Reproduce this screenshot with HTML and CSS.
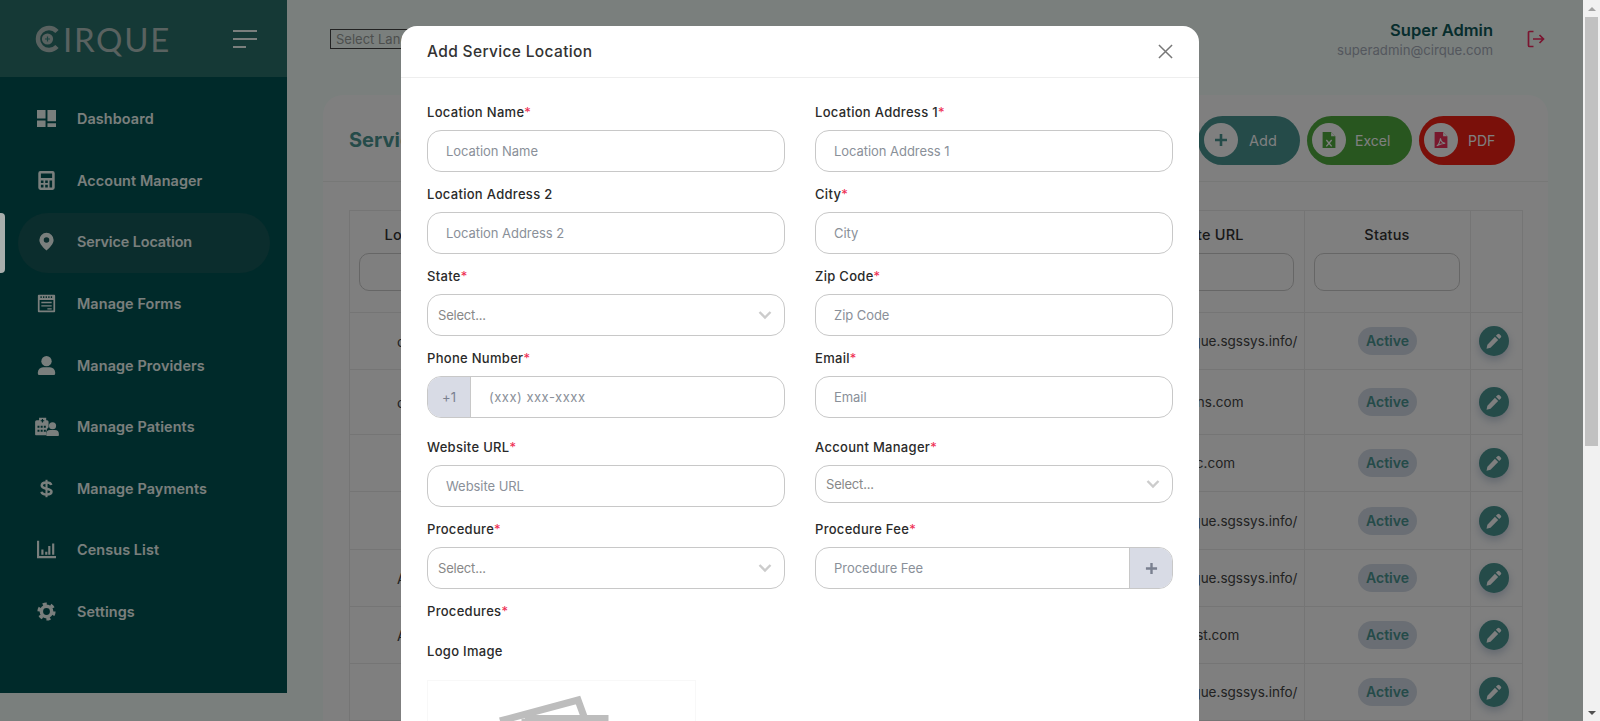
FILE: index.html
```html
<!DOCTYPE html>
<html lang="en">
<head>
    <meta charset="UTF-8">
    <meta name="viewport" content="width=device-width, initial-scale=1.0">
    <title>Service Location</title>
    <link rel="stylesheet" href="styles.css">
</head>
<body>
    <!-- shared icons -->
    <svg class="sprite" aria-hidden="true">
        <symbol id="i-pencil" viewBox="0 0 16 16">
            <path d="M11.500 1.200a1.400 1.400 0 0 1 2 0l1.300 1.300a1.400 1.400 0 0 1 0 2l-1.600 1.600-3.300-3.300z" fill="currentColor"/>
            <path d="M8.900 3.800l3.300 3.300-7.700 7.700-4 .9.900-4z" fill="currentColor"/>
        </symbol>
        <symbol id="i-chevron" viewBox="0 0 14 10">
            <path d="M1.500 2l5.500 5.500L12.500 2" fill="none" stroke="currentColor" stroke-width="2.400"/>
        </symbol>
    </svg>

    <div class="app">
        <aside class="sidebar">
            <div class="brand">
                <div class="logo">
                    <svg class="logo-mark" viewBox="0 0 27 28">
                        <path d="M24 6.500A11 11 0 1 0 24 21.500" fill="none" stroke="currentColor" stroke-width="4.400"/>
                        <circle cx="14.500" cy="14" r="5.600" fill="currentColor"/>
                        <path d="M14.500 11.500v5M12 14h5" stroke="#328680" stroke-width="1.200"/>
                    </svg>
                    <span class="logo-text">IRQUE</span>
                </div>
                <div class="burger"><span></span><span></span><span class="short"></span></div>
            </div>
            <nav class="menu">
                <a class="menu-item">
                    <svg class="menu-icon" viewBox="2 3 20 18"><path d="M2 3h9v9H2zM13 3h9v12h-9zM2 14h9v7H2zM13 17h9v4h-9z"/></svg>
                    Dashboard
                </a>
                <a class="menu-item">
                    <svg class="menu-icon" viewBox="1 1 22 22"><path fill-rule="evenodd" d="M5 1h14a2.500 2.500 0 0 1 2.500 2.500v17A2.500 2.500 0 0 1 19 23H5a2.500 2.500 0 0 1-2.500-2.500v-17A2.500 2.500 0 0 1 5 1zm.5 3v5h13V4zm0 8v3h3v-3zm5 0v3h3v-3zm5 0v8h3v-8zm-10 5v3h3v-3zm5 0v3h3v-3z"/></svg>
                    Account Manager
                </a>
                <a class="menu-item active">
                    <svg class="menu-icon" viewBox="0 0 24 24"><path fill-rule="evenodd" d="M12 1a9 9 0 0 1 9 9c0 5-5.500 10-9 13.500C8.500 20 3 15 3 10a9 9 0 0 1 9-9zm0 5.500a3.500 3.500 0 1 0 0 7 3.500 3.500 0 0 0 0-7z"/></svg>
                    Service Location
                </a>
                <a class="menu-item">
                    <svg class="menu-icon" viewBox="1 1 22 22"><path fill-rule="evenodd" d="M3 2h18a1 1 0 0 1 1 1v18a1 1 0 0 1-1 1H3a1 1 0 0 1-1-1V3a1 1 0 0 1 1-1zm1 6v12h16V8zm2 2h12v1.600H6zm0 4h12v1.600H6zm7 3.500h5v1.500h-5zM5 3.500h1.500v2H5zm3 0h1.500v2H8zm3 0h1.500v2H11zm3 0h1.500v2H14zm3 0h1.500v2H17z"/></svg>
                    Manage Forms
                </a>
                <a class="menu-item">
                    <svg class="menu-icon" viewBox="1 1 22 22"><circle cx="12" cy="7" r="6"/><path d="M8 14h8a6 6 0 0 1 6 6v1.500a1.500 1.500 0 0 1-1.500 1.500h-17A1.500 1.500 0 0 1 2 21.500V20a6 6 0 0 1 6-6z"/></svg>
                    Manage Providers
                </a>
                <a class="menu-item">
                    <svg class="menu-icon wide" viewBox="0 0 30 24"><path fill-rule="evenodd" d="M5 1h9v3h1a2 2 0 0 1 2 2v7a7 7 0 0 0-3 6v4H1a1 1 0 0 1-1-1V6a2 2 0 0 1 2-2h3zm2 10v2.500h2.500V11zm-4 0v2.500h2.500V11zm8 0v2.500h2.500V11zm-8 5v2.500h2.500V16zm8 0v2.500h2.500V16zm-4 0v2.500h2.500V16zM8.500 2.500v1.500H7v1.500h1.500V7H10V5.500h1.500V4H10V2.500z"/><circle cx="22" cy="11" r="4.500"/><path d="M19 16.500h6a5 5 0 0 1 5 5V23a1 1 0 0 1-1 1H15a1 1 0 0 1-1-1v-1.500a5 5 0 0 1 5-5z"/></svg>
                    Manage Patients
                </a>
                <a class="menu-item">
                    <svg class="menu-icon" viewBox="0 0 24 24"><path d="M12 1v22" stroke="currentColor" stroke-width="2.600"/><path d="M18 7.500C17.500 5.500 15 4.500 12 4.500c-3.500 0-6 1.600-6 3.800 0 5.400 12.300 2.400 12.300 7.800 0 2.200-2.800 3.400-6.300 3.400-3.200 0-5.800-1.100-6.300-3.500" fill="none" stroke="currentColor" stroke-width="3.200"/></svg>
                    Manage Payments
                </a>
                <a class="menu-item">
                    <svg class="menu-icon" viewBox="1 2 22 20"><path d="M1 2h2.500v17.500H23V22H1zM6 12h2.500v6H6zM10.500 14.500H13V18h-2.500zM14 8h2.500v10H14zM18.500 5H21v13h-2.500z"/></svg>
                    Census List
                </a>
                <a class="menu-item">
                    <svg class="menu-icon" viewBox="0 0 24 24"><circle cx="12" cy="12" r="6.500" fill="none" stroke="currentColor" stroke-width="4.400"/><circle cx="12" cy="12" r="9.700" fill="none" stroke="currentColor" stroke-width="3.600" stroke-dasharray="5.100 5.060"/></svg>
                    Settings
                </a>
            </nav>
        </aside>

        <main class="main">
            <header class="topbar">
                <select class="lang-select">
                    <option>Select Language</option>
                </select>
                <div class="user">
                    <div class="user-name">Super Admin</div>
                    <div class="user-mail">superadmin@cirque.com</div>
                </div>
                <svg class="logout" viewBox="0 0 18 18">
                    <path d="M6.500 1.500H2.500a1 1 0 0 0-1 1v13a1 1 0 0 0 1 1h4M6 9h10.500M12.500 5l4 4-4 4" fill="none" stroke="currentColor" stroke-width="1.700"/>
                </svg>
            </header>

            <section class="card">
                <div class="card-head">
                    <h2 class="card-title">Service Location</h2>
                    <div class="actions">
                        <button class="pill-btn btn-add">
                            <span class="pill-circle">
                                <svg viewBox="0 0 14 14"><path d="M7 1v12M1 7h12" stroke="#4a9693" stroke-width="2.600"/></svg>
                            </span>
                            Add
                        </button>
                        <button class="pill-btn btn-excel">
                            <span class="pill-circle">
                                <svg viewBox="0 0 12 15"><path d="M0 0h8l4 4v11H0z" fill="#50ac3e"/><path d="M3.500 7.500l5 6M8.500 7.500l-5 6" stroke="#fff" stroke-width="1.300"/><path d="M8 0v4h4z" fill="#fff"/></svg>
                            </span>
                            Excel
                        </button>
                        <button class="pill-btn btn-pdf">
                            <span class="pill-circle">
                                <svg viewBox="0 0 12 15"><path d="M0 0h8l4 4v11H0z" fill="#f0305a"/><path d="M8 0v4h4z" fill="#fff"/><path d="M2 13c2-1 3-4 3.500-7 .5 3 2 4.500 4.500 4.500-3 0-5.500 1-8 2.500z" fill="none" stroke="#fff" stroke-width="1"/></svg>
                            </span>
                            PDF
                        </button>
                    </div>
                </div>

                <table class="data-table">
                    <colgroup>
                        <col class="col-name">
                        <col class="col-address">
                        <col class="col-phone">
                        <col class="col-url">
                        <col class="col-status">
                        <col class="col-edit">
                    </colgroup>
                    <thead>
                        <tr>
                            <th class="th-name">Location Name<input class="filter"></th>
                            <th>Address<input class="filter"></th>
                            <th>Phone<input class="filter"></th>
                            <th>Website URL<input class="filter"></th>
                            <th>Status<input class="filter"></th>
                            <th></th>
                        </tr>
                    </thead>
                    <tbody>
                        <tr>
                            <td class="td-name">cirque</td><td></td><td></td>
                            <td class="td-url">https://app1.cirque.sgssys.info/</td>
                            <td><span class="badge">Active</span></td>
                            <td class="td-edit"><button class="edit-btn"><svg><use href="#i-pencil"/></svg></button></td>
                        </tr>
                        <tr class="tall">
                            <td class="td-name">cirque</td><td></td><td></td>
                            <td class="td-url">mediplans.com</td>
                            <td><span class="badge">Active</span></td>
                            <td class="td-edit"><button class="edit-btn"><svg><use href="#i-pencil"/></svg></button></td>
                        </tr>
                        <tr>
                            <td class="td-name"></td><td></td><td></td>
                            <td class="td-url">sgclinic.com</td>
                            <td><span class="badge">Active</span></td>
                            <td class="td-edit"><button class="edit-btn"><svg><use href="#i-pencil"/></svg></button></td>
                        </tr>
                        <tr>
                            <td class="td-name"></td><td></td><td></td>
                            <td class="td-url">https://app1.cirque.sgssys.info/</td>
                            <td><span class="badge">Active</span></td>
                            <td class="td-edit"><button class="edit-btn"><svg><use href="#i-pencil"/></svg></button></td>
                        </tr>
                        <tr>
                            <td class="td-name">Acme</td><td></td><td></td>
                            <td class="td-url">https://app1.cirque.sgssys.info/</td>
                            <td><span class="badge">Active</span></td>
                            <td class="td-edit"><button class="edit-btn"><svg><use href="#i-pencil"/></svg></button></td>
                        </tr>
                        <tr>
                            <td class="td-name">Acme</td><td></td><td></td>
                            <td class="td-url">clinictest.com</td>
                            <td><span class="badge">Active</span></td>
                            <td class="td-edit"><button class="edit-btn"><svg><use href="#i-pencil"/></svg></button></td>
                        </tr>
                        <tr>
                            <td class="td-name"></td><td></td><td></td>
                            <td class="td-url">https://app1.cirque.sgssys.info/</td>
                            <td><span class="badge">Active</span></td>
                            <td class="td-edit"><button class="edit-btn"><svg><use href="#i-pencil"/></svg></button></td>
                        </tr>
                    </tbody>
                </table>
            </section>
        </main>

        <div class="backdrop"></div>

        <section class="modal">
            <div class="modal-head">
                <h3 class="modal-title">Add Service Location</h3>
                <svg class="modal-close" viewBox="0 0 16 16"><path d="M1 1l14 14M15 1L1 15" stroke="currentColor" stroke-width="1.600"/></svg>
            </div>
            <div class="modal-body">
                <div class="form-grid">
                    <div class="field">
                        <label>Location Name<span class="req">*</span></label>
                        <input class="control" placeholder="Location Name">
                    </div>
                    <div class="field">
                        <label>Location Address 1<span class="req">*</span></label>
                        <input class="control" placeholder="Location Address 1">
                    </div>
                    <div class="field">
                        <label>Location Address 2</label>
                        <input class="control" placeholder="Location Address 2">
                    </div>
                    <div class="field">
                        <label>City<span class="req">*</span></label>
                        <input class="control" placeholder="City">
                    </div>
                    <div class="field">
                        <label>State<span class="req">*</span></label>
                        <div class="control select">Select...<svg class="chevron"><use href="#i-chevron"/></svg></div>
                    </div>
                    <div class="field">
                        <label>Zip Code<span class="req">*</span></label>
                        <input class="control" placeholder="Zip Code">
                    </div>
                    <div class="field field-phone">
                        <label>Phone Number<span class="req">*</span></label>
                        <div class="control group">
                            <span class="prefix">+1</span>
                            <input class="group-input phone-input" placeholder="(xxx) xxx-xxxx">
                        </div>
                    </div>
                    <div class="field field-phone">
                        <label>Email<span class="req">*</span></label>
                        <input class="control" placeholder="Email">
                    </div>
                    <div class="field">
                        <label>Website URL<span class="req">*</span></label>
                        <input class="control" placeholder="Website URL">
                    </div>
                    <div class="field">
                        <label>Account Manager<span class="req">*</span></label>
                        <div class="control select short">Select...<svg class="chevron"><use href="#i-chevron"/></svg></div>
                    </div>
                    <div class="field">
                        <label>Procedure<span class="req">*</span></label>
                        <div class="control select">Select...<svg class="chevron"><use href="#i-chevron"/></svg></div>
                    </div>
                    <div class="field">
                        <label>Procedure Fee<span class="req">*</span></label>
                        <div class="control group">
                            <input class="group-input" placeholder="Procedure Fee">
                            <span class="suffix">
                                <svg viewBox="0 0 14 14"><path d="M7 1v12M1 7h12" stroke="currentColor" stroke-width="2.600"/></svg>
                            </span>
                        </div>
                    </div>
                </div>
                <label class="block-label procedures-label">Procedures<span class="req">*</span></label>
                <label class="block-label logo-label">Logo Image</label>
                <div class="logo-box">
                    <svg class="logo-placeholder" viewBox="0 0 269 60">
                        <path d="M72 40l78-21 8 22" fill="none" stroke="#bdbdbd" stroke-width="7"/>
                        <path d="M97 37.500h80V60M97 37.500V60" fill="none" stroke="#bdbdbd" stroke-width="7"/>
                    </svg>
                </div>
            </div>
        </section>
    </div>

    <div class="scrollbar">
        <span class="arrow up"></span>
        <span class="thumb"></span>
        <span class="arrow down"></span>
    </div>
</body>
</html>
```

FILE: styles.css
```css
* {
    box-sizing: border-box;
}

body {
    margin: 0;
    height: 721px;
    display: flex;
    overflow: hidden;
    font-family: Inter, "Open Sans", sans-serif;
    background-color: #f4fffb;
}

.sprite {
    display: none;
}

.app {
    position: relative;
    flex: 1;
    display: flex;
    align-items: flex-start;
    height: 721px;
    overflow: hidden;
}

/* sidebar */
.sidebar {
    width: 287px;
    height: 693px;
    flex-shrink: 0;
    background-color: #005454;
    color: #f4fffb;
}

.brand {
    height: 77px;
    display: flex;
    align-items: center;
    justify-content: space-between;
    padding: 0 30px 0 33px;
    background-color: #2b726d;
}

.logo {
    display: flex;
    align-items: center;
    gap: 3px;
    color: #b2c4c0;
}

.logo-mark {
    width: 27px;
    height: 28px;
}

.logo-text {
    font-family: Lato, sans-serif;
    font-size: 33px;
    line-height: 34px;
    letter-spacing: 1.7px;
}

.burger {
    display: flex;
    flex-direction: column;
    gap: 6px;
    width: 24px;
}

.burger span {
    height: 2px;
    background-color: #f4fffb;
}

.burger .short {
    width: 13px;
}

.menu {
    padding-top: 11px;
}

.menu-item {
    position: relative;
    display: flex;
    align-items: center;
    height: 61.6px;
    margin: 0 17px 0 18px;
    padding-left: 19px;
    gap: 21px;
    font-size: 14.4px;
    font-weight: 600;
    letter-spacing: 0.1px;
    white-space: nowrap;
}

.menu-item.active {
    height: 60px;
    margin-top: 1.8px;
    margin-bottom: -0.2px;
    padding-bottom: 2.5px;
    border-radius: 30px;
    letter-spacing: -0.1px;
    background-color: #165a5a;
}

/* sits above the modal backdrop, as in the original */
.menu-item.active::before {
    content: "";
    position: absolute;
    left: -18px;
    top: 0;
    z-index: 3;
    width: 5px;
    height: 60px;
    border-radius: 0 4px 4px 0;
    background-color: #a8aeac;
}

.menu-icon {
    width: 19px;
    height: 19px;
    flex-shrink: 0;
    fill: currentColor;
}

.menu-icon.wide {
    width: 24px;
    height: 19px;
    margin: 0 -2.5px;
}

/* main area */
.main {
    flex: 1;
    min-width: 0;
}

.topbar {
    height: 95px;
    display: flex;
    align-items: center;
    padding: 0 38px 0 43px;
}

.lang-select {
    width: 150px;
    height: 20px;
    margin-bottom: 18px;
    padding: 0 0 0 1px;
    font-family: inherit;
    font-size: 13px;
    color: #9a9e9c;
    background-color: transparent;
    border: 1px solid #444;
}

.user {
    margin: 0 34px 16px auto;
    text-align: right;
}

.user-name {
    font-size: 16.5px;
    font-weight: 600;
    line-height: 21px;
    color: #0e5a5a;
}

.user-mail {
    font-size: 13.2px;
    line-height: 18px;
    color: #a8aebb;
}

.logout {
    width: 18px;
    height: 18px;
    margin-bottom: 18px;
    color: #f52a60;
}

.card {
    margin: 0 35px 0 36px;
    padding-bottom: 20px;
    border-radius: 20px 20px 0 0;
    background-color: #fff;
}

.card-head {
    height: 87px;
    display: flex;
    align-items: center;
    justify-content: space-between;
    padding: 4px 33px 0 26px;
    border-bottom: 1px solid #eef0ef;
}

.card-title {
    margin: 0;
    font-size: 20px;
    font-weight: 700;
    color: #4a9693;
}

.actions {
    display: flex;
    gap: 7px;
}

.pill-btn {
    display: flex;
    align-items: center;
    height: 49px;
    padding: 0 0 0 5px;
    gap: 9px;
    border: 0;
    border-radius: 25px;
    font-family: inherit;
    font-size: 14px;
    color: #fff;
}

.pill-circle {
    width: 34px;
    height: 34px;
    display: flex;
    align-items: center;
    justify-content: center;
    border-radius: 50%;
    background-color: #fff;
}

.pill-circle svg {
    width: 14px;
    height: 16px;
}

.btn-add {
    width: 102px;
    padding-left: 6px;
    gap: 11px;
    font-size: 14.5px;
    background-color: #4a9693;
}

.btn-excel {
    width: 105px;
    background-color: #50ac3e;
}

.btn-pdf {
    width: 96px;
    gap: 10px;
    background-color: #f42014;
}

.data-table {
    width: 1173px;
    margin: 28px 0 0 26px;
    table-layout: fixed;
    border-collapse: collapse;
}

.col-name { width: 172px; }
.col-address { width: 300px; }
.col-phone { width: 272px; }
.col-url { width: 211px; }
.col-status { width: 166px; }
.col-edit { width: 52px; }

.data-table th,
.data-table td {
    border: 1px solid #eaeaea;
    text-align: center;
}

.data-table th {
    height: 102px;
    padding: 13px 10px 0 9px;
    vertical-align: top;
    font-size: 14.5px;
    font-weight: 500;
    line-height: 22px;
    letter-spacing: 0.2px;
    color: #333;
}

.data-table .th-name {
    text-indent: 6px;
}

.filter {
    display: block;
    width: 100%;
    height: 38px;
    margin-top: 7px;
    border: 1px solid #ccc;
    border-radius: 10px;
    background-color: #fff;
}

.data-table td {
    height: 57px;
    padding: 0 4px;
    font-size: 14px;
    color: #444;
    white-space: nowrap;
}

.data-table td.td-name {
    padding-left: 47px;
    text-align: left;
}

.data-table td.td-url {
    padding-right: 12px;
    font-size: 13.5px;
}

.data-table td.td-edit {
    padding: 0 7px 0 1px;
}

.data-table tr.tall td {
    height: 65px;
}

.data-table tr:nth-child(4) td {
    height: 58px;
}

.badge {
    display: inline-block;
    width: 59px;
    height: 28px;
    border-radius: 14px;
    font-size: 14px;
    font-weight: 600;
    line-height: 28px;
    color: #4a9693;
    background-color: #d5dde8;
}

.edit-btn {
    display: inline-flex;
    align-items: center;
    justify-content: center;
    width: 30px;
    height: 30px;
    padding: 0;
    border: 0;
    border-radius: 50%;
    color: #fff;
    background-color: #4a9693;
    box-shadow: 0 4px 8px rgba(90, 120, 160, 0.35);
}

.edit-btn svg {
    width: 16px;
    height: 16px;
}

/* modal */
.backdrop {
    position: absolute;
    inset: 0;
    z-index: 2;
    background-color: rgba(0, 0, 0, 0.5);
}

.modal {
    position: absolute;
    left: 401px;
    top: 26px;
    z-index: 4;
    width: 798px;
    height: 780px;
    border-radius: 16px;
    background-color: #fff;
}

.modal-head {
    height: 52px;
    display: flex;
    align-items: center;
    justify-content: space-between;
    padding: 0 26px;
    border-bottom: 1px solid #eeeeee;
}

.modal-title {
    margin: 0;
    font-size: 15.5px;
    font-weight: 500;
    letter-spacing: 0.35px;
    color: #333;
}

.modal-close {
    width: 15px;
    height: 15px;
    color: #777;
}

.modal-body {
    padding: 23px 26px 0;
}

.form-grid {
    display: grid;
    grid-template-columns: 358px 358px;
    column-gap: 30px;
}

.field {
    margin-bottom: 11px;
}

.field-phone {
    margin-bottom: 18px;
}

.field label,
.block-label {
    display: block;
    height: 22px;
    margin-bottom: 7px;
    font-size: 13px;
    font-weight: 450;
    line-height: 22px;
    letter-spacing: 0.3px;
    color: #2a2a2a;
}

.req {
    font-weight: 400;
    color: #ee2a50;
}

.control {
    display: block;
    width: 100%;
    height: 42px;
    padding: 0 18px;
    border: 1px solid #c8c8c8;
    border-radius: 14px;
    background-color: #fff;
    font-family: inherit;
    font-size: 13px;
    letter-spacing: -0.05px;
}

.control::placeholder,
.group-input::placeholder {
    color: #8a9099;
    opacity: 1;
}

.select {
    display: flex;
    align-items: center;
    justify-content: space-between;
    padding: 0 12px 0 10px;
    letter-spacing: -0.2px;
    color: #888;
}

.select.short {
    height: 38px;
}

.chevron {
    width: 14px;
    height: 10px;
    color: #ccc;
}

.group {
    display: flex;
    padding: 0;
    overflow: hidden;
}

.group-input {
    flex: 1;
    min-width: 0;
    padding: 0 18px;
    border: 0;
    background-color: transparent;
    font-family: inherit;
    font-size: 13px;
    letter-spacing: -0.05px;
}

.phone-input {
    letter-spacing: 0.5px;
}

.prefix,
.suffix {
    display: flex;
    align-items: center;
    justify-content: center;
    background-color: #d8dbe5;
    color: #7a8090;
}

.prefix {
    width: 43px;
    border-right: 1px solid #c8c8c8;
}

.suffix {
    width: 43px;
    border-left: 1px solid #c8c8c8;
}

.suffix svg {
    width: 13px;
    height: 13px;
}

.procedures-label {
    margin-bottom: 18px;
}

.logo-label {
    margin-bottom: 18px;
}

.logo-box {
    width: 269px;
    height: 200px;
    border: 1px solid #f8f8f8;
}

.logo-placeholder {
    display: block;
    width: 269px;
    height: 60px;
}

/* window scrollbar */
.scrollbar {
    width: 17px;
    flex-shrink: 0;
    height: 721px;
    display: flex;
    flex-direction: column;
    background-color: #f1f1f1;
}

.arrow {
    height: 17px;
    flex-shrink: 0;
    display: flex;
    align-items: center;
    justify-content: center;
}

.arrow::before {
    content: "";
    border-left: 4px solid transparent;
    border-right: 4px solid transparent;
}

.arrow.up::before {
    border-bottom: 4px solid #a3a3a3;
}

.arrow.down {
    margin-top: auto;
}

.arrow.down::before {
    border-top: 4px solid #505050;
}

.thumb {
    height: 429px;
    margin: 0 2px;
    background-color: #c1c1c1;
}
```
